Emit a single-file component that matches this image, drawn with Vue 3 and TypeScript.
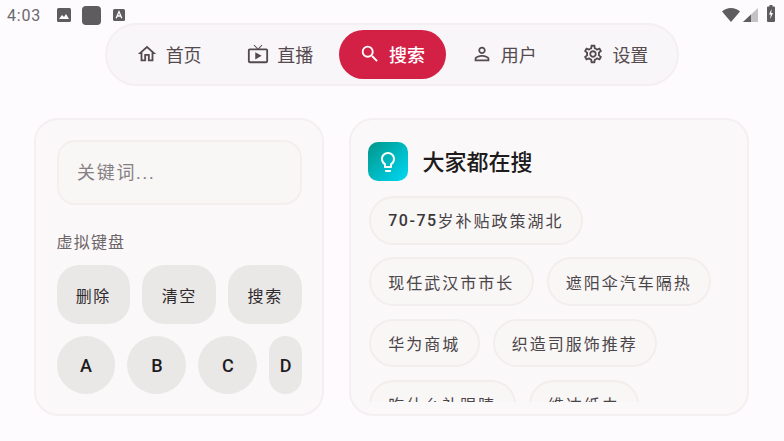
<script setup lang="ts">
interface NavItem { label: string; icon: string; active?: boolean }
interface Chip { lead?: string; text: string }
const nav: NavItem[] = [
  { label: '首页', icon: 'home' },
  { label: '直播', icon: 'tv' },
  { label: '搜索', icon: 'search', active: true },
  { label: '用户', icon: 'user' },
  { label: '设置', icon: 'gear' },
]
const actions = ['删除', '清空', '搜索']
const letters = ['A', 'B', 'C', 'D']
const rows: Chip[][] = [
  [{ lead: '70-75', text: '岁补贴政策湖北' }],
  [{ text: '现任武汉市市长' }, { text: '遮阳伞汽车隔热' }],
  [{ text: '华为商城' }, { text: '织造司服饰推荐' }],
  [{ text: '吃什么补眼睛' }, { text: '维达纸巾' }],
]
</script>

<template>
  <div class="page">
    <header class="status">
      <span class="time">4:03</span>
      <svg class="st-img" viewBox="0 0 14 14"><rect width="14" height="14" rx="1.5" fill="#5f5c60"/><path d="M2 11l3-4 2 2 2-3 3 5z" fill="#fff"/></svg>
      <span class="st-square"></span>
      <svg class="st-a" viewBox="0 0 12 12"><rect width="12" height="12" rx="1.5" fill="#5f5c60"/><path d="M3.2 9.2L6 2.6l2.8 6.6M4.2 7h3.6" fill="none" stroke="#fff" stroke-width="1.3"/></svg>
      <span class="spacer"></span>
      <div class="st-right">
        <svg class="st-wifi" viewBox="0 0 18 14"><path d="M0 3.6C2.4 1.3 5.5 0 9 0s6.6 1.3 9 3.6L9 14z" fill="#5f5c60"/></svg>
        <svg class="st-signal" viewBox="0 0 15 14"><path d="M15 0v14H0z" fill="#c4c2c5"/><path d="M8 6.500V14H0z" fill="#5f5c60"/></svg>
        <svg class="st-batt" viewBox="0 0 8 17"><path d="M2.5 0h3v1.500H7a1 1 0 0 1 1 1V16a1 1 0 0 1-1 1H1a1 1 0 0 1-1-1V2.500a1 1 0 0 1 1-1h1.500z" fill="#5f5c60"/><path d="M4.600 4L2 9.500h1.700L3.200 14 6 8H4.200z" fill="#fff"/></svg>
      </div>
    </header>

    <nav class="nav-wrap">
      <div class="nav">
        <button v-for="item in nav" :key="item.label" class="nav-item" :class="{ active: item.active }">
          <svg class="nav-icon" viewBox="0 0 24 24" fill="currentColor">
            <path v-if="item.icon === 'home'" d="M12 5.690l5 4.500V18h-2v-6H9v6H7v-7.810l5-4.500M12 3L2 12h3v8h6v-6h2v6h6v-8h3L12 3z"/>
            <path v-else-if="item.icon === 'tv'" d="M21 6h-7.590l3.290-3.290L16 2l-4 4-4-4-.71.71L10.590 6H3c-1.100 0-2 .89-2 2v12c0 1.100.9 2 2 2h18c1.100 0 2-.9 2-2V8c0-1.110-.9-2-2-2zm0 14H3V8h18v12zM9 10v8l7-4z"/>
            <path v-else-if="item.icon === 'search'" d="M15.500 14h-.79l-.28-.27A6.470 6.470 0 0 0 16 9.500 6.500 6.500 0 1 0 9.500 16c1.610 0 3.090-.59 4.230-1.570l.27.28v.79l5 4.990L20.490 19l-4.990-5zm-6 0C7.010 14 5 11.990 5 9.500S7.010 5 9.500 5 14 7.010 14 9.500 11.990 14 9.500 14z"/>
            <path v-else-if="item.icon === 'user'" d="M12 5.900a2.100 2.100 0 1 1 0 4.200 2.100 2.100 0 0 1 0-4.200m0 9c2.970 0 6.100 1.460 6.100 2.100v1.100H5.900V17c0-.64 3.130-2.100 6.100-2.100M12 4C9.790 4 8 5.790 8 8s1.790 4 4 4 4-1.790 4-4-1.790-4-4-4zm0 9c-2.670 0-8 1.340-8 4v3h16v-3c0-2.660-5.330-4-8-4z"/>
            <path v-else d="M19.430 12.980c.04-.32.070-.64.070-.98 0-.34-.03-.66-.07-.98l2.110-1.650c.19-.15.24-.42.120-.64l-2-3.460a.5.5 0 0 0-.61-.22l-2.490 1c-.52-.4-1.080-.73-1.690-.98l-.38-2.650A.49.49 0 0 0 14 2h-4c-.25 0-.46.18-.49.420l-.38 2.650c-.61.25-1.170.59-1.690.98l-2.490-1a.57.57 0 0 0-.18-.03.5.5 0 0 0-.43.250l-2 3.460c-.13.220-.07.490.12.640l2.110 1.650c-.04.320-.07.650-.07.980 0 .33.030.66.070.98l-2.110 1.650c-.19.150-.24.420-.12.640l2 3.460a.5.5 0 0 0 .61.220l2.490-1c.52.400 1.080.730 1.690.980l.38 2.650c.03.240.24.420.49.420h4c.25 0 .46-.18.49-.42l.38-2.650c.61-.25 1.170-.59 1.690-.98l2.490 1c.06.020.12.030.18.030.17 0 .34-.09.43-.25l2-3.460c.12-.22.07-.49-.12-.64l-2.110-1.650zm-1.980-1.710c.04.310.05.520.05.730 0 .21-.02.430-.05.730l-.14 1.130.89.700 1.080.84-.7 1.210-1.270-.51-1.040-.42-.9.680c-.43.320-.84.560-1.250.73l-1.060.43-.16 1.130-.2 1.350h-1.400l-.19-1.350-.16-1.130-1.060-.43c-.43-.18-.83-.41-1.230-.71l-.91-.7-1.060.43-1.270.51-.7-1.210 1.080-.84.890-.7-.14-1.130c-.03-.31-.05-.54-.05-.74s.02-.43.05-.73l.14-1.130-.89-.7-1.080-.84.7-1.210 1.270.51 1.040.42.900-.68c.43-.32.840-.56 1.250-.73l1.060-.43.160-1.130.2-1.350h1.390l.19 1.350.16 1.130 1.060.43c.43.180.83.410 1.230.71l.91.700 1.060-.43 1.270-.51.7 1.210-1.070.85-.89.700.14 1.130zM12 8c-2.210 0-4 1.790-4 4s1.790 4 4 4 4-1.790 4-4-1.790-4-4-4zm0 6c-1.100 0-2-.9-2-2s.9-2 2-2 2 .9 2 2-.9 2-2 2z"/>
          </svg>
          <span>{{ item.label }}</span>
        </button>
      </div>
    </nav>

    <main class="main">
      <section class="card left">
        <input class="kw" placeholder="关键词..." />
        <div class="kb-label">虚拟键盘</div>
        <div class="keys">
          <button v-for="a in actions" :key="a" class="key action">{{ a }}</button>
        </div>
        <div class="keys letters">
          <button v-for="l in letters" :key="l" class="key letter" :class="{ narrow: l === 'D' }">{{ l }}</button>
        </div>
      </section>

      <section class="card right">
        <div class="head">
          <span class="bulb">
            <svg viewBox="0 0 24 24" width="24" height="24" fill="#fff"><path d="M9 21c0 .55.45 1 1 1h4c.55 0 1-.45 1-1v-1H9v1zm3-19C8.140 2 5 5.140 5 9c0 2.380 1.190 4.470 3 5.740V17c0 .55.45 1 1 1h6c.55 0 1-.45 1-1v-2.260c1.810-1.270 3-3.360 3-5.740 0-3.860-3.140-7-7-7zm2.850 11.100l-.85.6V16h-4v-2.300l-.85-.6A4.997 4.997 0 0 1 7 9c0-2.760 2.240-5 5-5s5 2.240 5 5c0 1.630-.8 3.160-2.150 4.100z"/></svg>
          </span>
          <h2>大家都在搜</h2>
        </div>
        <div class="chips">
          <div v-for="(row, i) in rows" :key="i" class="chip-row">
            <span v-for="c in row" :key="c.text" class="chip"><b v-if="c.lead" class="lead">{{ c.lead }}</b>{{ c.text }}</span>
          </div>
        </div>
      </section>
    </main>
  </div>
</template>

<style>
html, body { margin: 0; background: #fefbfe; }
</style>

<style scoped>
.page {
  width: 784px;
  height: 441px;
  overflow: hidden;
  background: #fefbfe;
  font-family: Roboto, "Noto Sans CJK SC", sans-serif;
  color: #1d1b1c;
  box-sizing: border-box;
}
.status {
  height: 30px;
  margin-bottom: -7.5px;
  display: flex;
  align-items: center;
  padding: 0 9px 0 7px;
  box-sizing: border-box;
  color: #6b696c;
}
.time { font-size: 16px; width: 35px; margin-right: 15px; letter-spacing: .8px; }
.st-img { width: 14px; height: 14px; margin-right: 11px; }
.st-square { width: 18.500px; height: 19px; border-radius: 4px; background: #5f5c60; margin-right: 12px; }
.st-a { width: 12px; height: 12px; }
.spacer { flex: 1; }
.st-right { display: flex; align-items: flex-end; margin-bottom: 3px; }
.st-wifi { width: 18px; height: 14px; margin-right: 3px; }
.st-signal { width: 15px; height: 14px; margin-right: 9px; }
.st-batt { width: 8px; height: 17px; }

.nav-wrap { display: flex; justify-content: center; }
.nav {
  width: 574px;
  height: 63px;
  box-sizing: border-box;
  display: flex;
  align-items: center;
  justify-content: center;
  gap: 4.700px;
  border: 2px solid #f3eff2;
  border-radius: 32px;
  background: #f9f6f9;
}
.nav-item {
  display: flex;
  align-items: center;
  justify-content: center;
  gap: 8px;
  width: 107px;
  height: 49px;
  flex: none;
  padding: 0;
  border: 0;
  border-radius: 25px;
  background: transparent;
  color: #554b4f;
  font: inherit;
  font-size: 18px;
}
.nav-item.active { background: #d32045; color: #fff; font-weight: 500; }
.nav-icon { width: 22px; height: 22px; flex: none; }

.main {
  display: flex;
  gap: 25.500px;
  padding: 32.500px 35px 0 34px;
}
.card {
  height: 298px;
  box-sizing: border-box;
  border: 2px solid #f4eff0;
  border-radius: 24px;
  background: #fbf8f9;
  flex: none;
}
.left { width: 289.500px; padding: 19.500px 19.500px 0 20.500px; }
.right { width: 400px; padding: 22px 17px 0; }
.kw {
  display: block;
  width: 100%;
  height: 65.500px;
  box-sizing: border-box;
  padding: 0 18.500px;
  border: 2px solid #f4efef;
  border-radius: 18px;
  background: #f9f6f6;
  font: inherit;
  font-size: 18px;
  letter-spacing: 1.700px;
  outline: none;
}
.kw::placeholder { color: #858083; opacity: 1; }
.kb-label { margin-top: 26px; font-size: 16px; line-height: 24px; letter-spacing: 1.200px; color: #6b6568; }
.keys { display: flex; gap: 12.300px; margin-top: 10px; }
.key {
  padding: 0;
  border: 0;
  background: #eae7e7;
  font: inherit;
  color: #2e2a2c;
}
.action { flex: 1; height: 59px; border-radius: 22px; font-size: 16px; letter-spacing: 1.600px; }
.letters { margin-top: 12px; }
.letter { width: 58.700px; height: 58px; border-radius: 50%; font-size: 18px; font-weight: 500; color: #1d1b1c; }
.letter.narrow { width: auto; flex: 1; border-radius: 17px; }

.head { display: flex; align-items: center; gap: 15px; height: 39px; }
.bulb {
  width: 39.500px;
  height: 39.500px;
  flex: none;
  border-radius: 10px;
  display: flex;
  align-items: center;
  justify-content: center;
  background: linear-gradient(135deg, #009688, #00d8f5);
}
h2 { margin: 0 0 4px; font-size: 22px; font-weight: 500; color: #1d1b1c; }
.chips {
  margin: 15px 0 0 1px;
  height: 206px;
  overflow: hidden;
  display: flex;
  flex-direction: column;
  gap: 12.700px;
}
.chip-row { display: flex; gap: 13px; }
.chip {
  height: 48.700px;
  box-sizing: border-box;
  display: flex;
  align-items: center;
  padding: 0 17.250px;
  border: 2px solid #f3eeee;
  border-radius: 25px;
  background: #f9f6f6;
  font-size: 16px;
  letter-spacing: 2px;
  color: #4a4548;
  flex: none;
}
.lead { font-weight: 500; color: #3a3639; letter-spacing: 1.500px; }
</style>
